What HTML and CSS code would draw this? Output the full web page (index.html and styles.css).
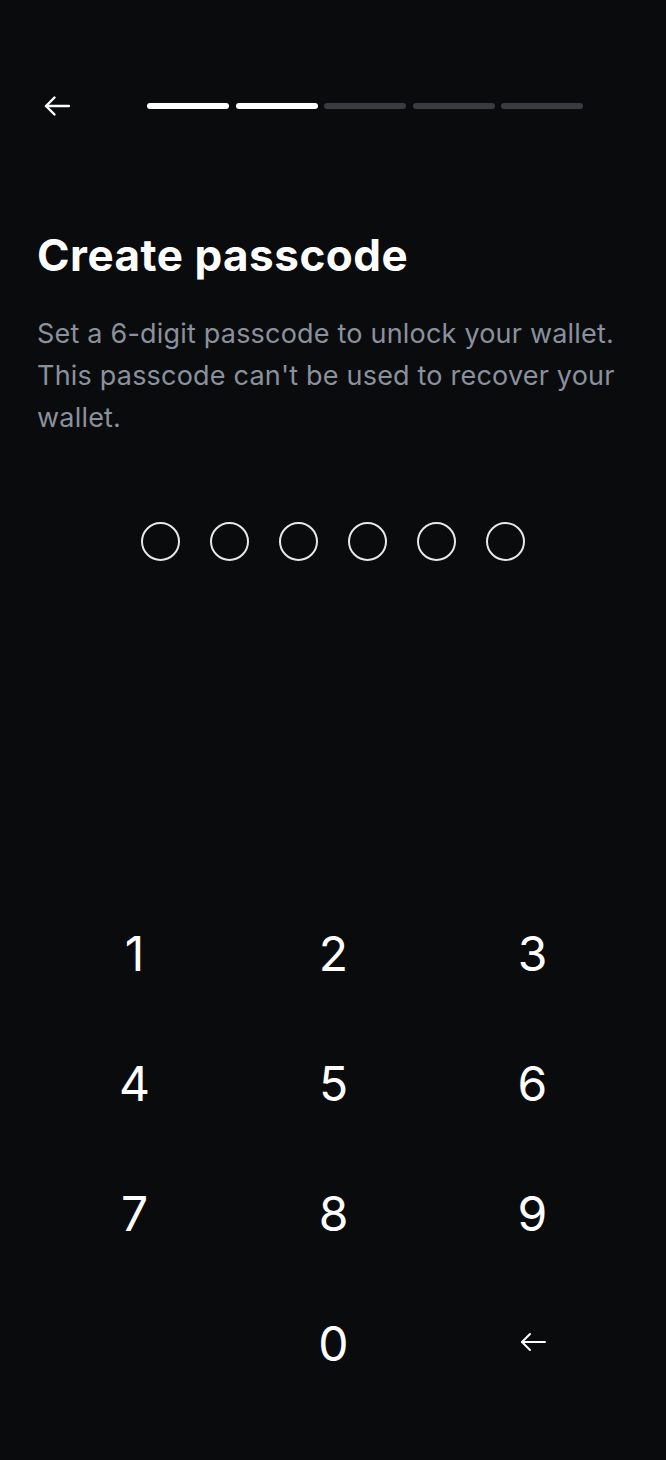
FILE: index.html
```html
<!DOCTYPE html>
<html>
<head>
  <meta charset="UTF-8">
  <title>Create passcode</title>
  <link rel="stylesheet" href="styles.css">
</head>
<body>
  <div class="pantalla">
    <!-- Cabecera: volver + progreso -->
    <div class="cabecera">
      <button class="volver" aria-label="Back">
        <svg width="26" height="20" viewBox="0 0 26 20" fill="none" stroke="#ffffff" stroke-width="2.4" stroke-linecap="round" stroke-linejoin="round">
          <path d="M25 10H2"/>
          <path d="M10.5 1.5L2 10l8.5 8.5"/>
        </svg>
      </button>
      <div class="progreso">
        <span class="paso hecho"></span>
        <span class="paso hecho"></span>
        <span class="paso"></span>
        <span class="paso"></span>
        <span class="paso"></span>
      </div>
    </div>

    <h1 class="titulo">Create passcode</h1>
    <p class="texto">Set a 6-digit passcode to unlock your wallet. This passcode can't be used to recover your wallet.</p>

    <div class="puntos">
      <span class="punto"></span>
      <span class="punto"></span>
      <span class="punto"></span>
      <span class="punto"></span>
      <span class="punto"></span>
      <span class="punto"></span>
    </div>

    <!-- Teclado numérico -->
    <div class="teclado">
      <button class="tecla">1</button>
      <button class="tecla">2</button>
      <button class="tecla">3</button>
      <button class="tecla">4</button>
      <button class="tecla">5</button>
      <button class="tecla">6</button>
      <button class="tecla">7</button>
      <button class="tecla">8</button>
      <button class="tecla">9</button>
      <span class="tecla vacia"></span>
      <button class="tecla">0</button>
      <button class="tecla borrar" aria-label="Delete">
        <svg width="26" height="20" viewBox="0 0 26 20" fill="none" stroke="#ffffff" stroke-width="2" stroke-linecap="round" stroke-linejoin="round">
          <path d="M25 10H2"/>
          <path d="M10 2L2 10l8 8"/>
        </svg>
      </button>
    </div>
  </div>
</body>
</html>
```

FILE: styles.css
```css
:root {
  --fondo: #0a0b0d;
  --blanco: #ffffff;
  --gris: #8a919e;
  --inactivo: #3a3b40;
}
body {
  margin: 0;
  background: var(--fondo);
  color: var(--blanco);
  font-family: Inter, 'Liberation Sans', sans-serif;
}
button {
  background: transparent;
  border: none;
  padding: 0;
  color: inherit;
  font: inherit;
  cursor: pointer;
}
.pantalla {
  width: 666px;
  min-height: 1460px;
  box-sizing: border-box;
  padding: 0 37px;
}
.cabecera {
  display: flex;
  align-items: center;
  height: 24px;
  padding-top: 94px;
}
.volver {
  display: flex;
  margin-left: 7px;
  width: 26px;
  height: 20px;
}
.progreso {
  display: flex;
  gap: 6.5px;
  margin-left: 77px;
}
.paso {
  width: 82px;
  height: 6px;
  border-radius: 3px;
  background: var(--inactivo);
}
.paso.hecho {
  background: var(--blanco);
}
.titulo {
  margin: 112px 0 0;
  font-size: 44px;
  line-height: 50px;
  font-weight: 700;
  letter-spacing: 0.5px;
}
.texto {
  margin: 33px 0 0;
  font-size: 27px;
  line-height: 42px;
  letter-spacing: 0.2px;
  color: var(--gris);
}
.puntos {
  display: flex;
  justify-content: center;
  gap: 30px;
  margin-top: 83px;
}
.punto {
  width: 39px;
  height: 39px;
  box-sizing: border-box;
  border: 2px solid #e8e8e8;
  border-radius: 50%;
}
.teclado {
  display: grid;
  grid-template-columns: repeat(3, 199px);
  grid-auto-rows: 130px;
  margin: 327px 0 0 -2px;
}
.tecla {
  display: flex;
  align-items: center;
  justify-content: center;
  font-size: 48px;
  font-weight: 400;
}
.borrar svg {
  margin-top: -2px;
}
```
